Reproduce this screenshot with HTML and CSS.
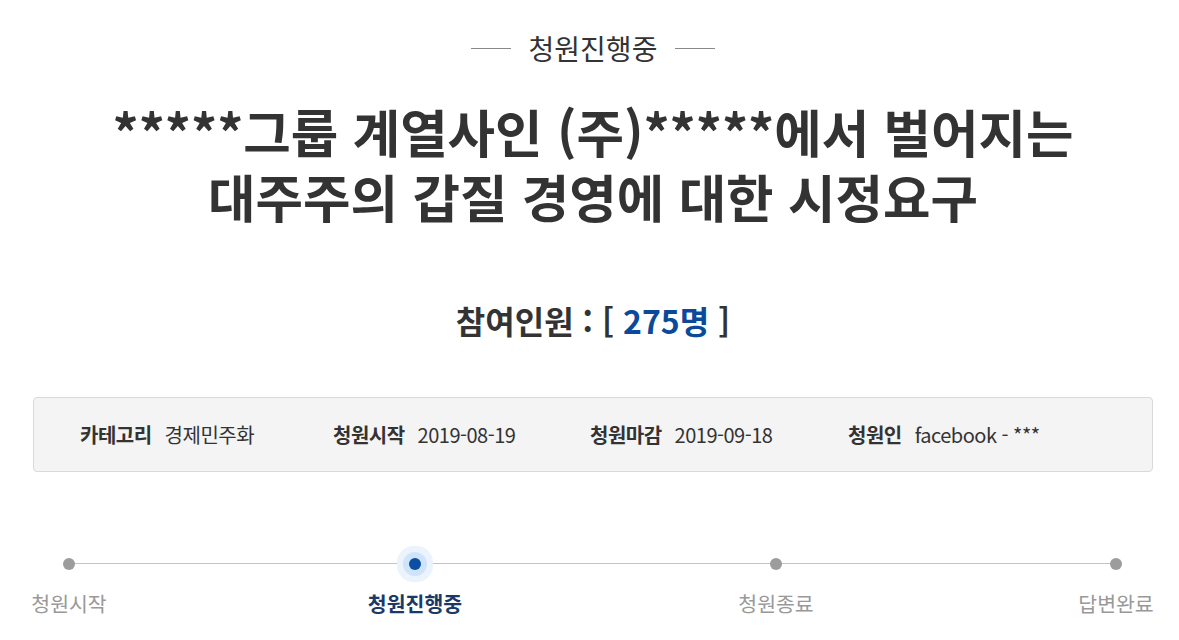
FILE: index.html
```html
<!DOCTYPE html>
<html lang="ko">
<head>
<meta charset="utf-8">
<link rel="stylesheet" href="styles.css">
</head>
<body>
<main class="page">
  <div class="status"><span class="status-line"></span><span class="status-text">청원진행중</span><span class="status-line"></span></div>
  <h1 class="title"><span class="title-line">*****그룹 계열사인 (주)*****에서 벌어지는</span><span class="title-line">대주주의 갑질 경영에 대한 시정요구</span></h1>
  <h2 class="count">참여인원 : [ <span class="count-num">275명</span> ]</h2>
  <ul class="info">
    <li class="info-item"><strong>카테고리</strong><span>경제민주화</span></li>
    <li class="info-item"><strong>청원시작</strong><span>2019-08-19</span></li>
    <li class="info-item"><strong>청원마감</strong><span>2019-09-18</span></li>
    <li class="info-item"><strong>청원인</strong><span>facebook - ***</span></li>
  </ul>
  <ol class="progress">
    <li class="step"><span class="dot"></span><span class="label">청원시작</span></li>
    <li class="spacer"></li>
    <li class="step active"><span class="dot"></span><span class="label">청원진행중</span></li>
    <li class="spacer"></li>
    <li class="step"><span class="dot"></span><span class="label">청원종료</span></li>
    <li class="spacer"></li>
    <li class="step"><span class="dot"></span><span class="label">답변완료</span></li>
  </ol>
</main>
</body>
</html>
```
FILE: styles.css
```css
* { box-sizing: border-box; }
html, body { margin: 0; padding: 0; background: #fff; }
body {
  font-family: "Noto Sans CJK KR", "Noto Sans", sans-serif;
  color: #333;
}
.page {
  width: 1120px;
  margin-left: 33px;
  padding-top: 30px;
}
.status {
  display: flex;
  justify-content: center;
  align-items: center;
  gap: 18px;
  height: 36px;
  font-size: 28px;
  line-height: 36px;
  color: #333;
}
.status-line {
  display: block;
  width: 40px;
  height: 1px;
  background: #888;
}
.title {
  margin: 32px 0 0;
  display: flex;
  flex-direction: column;
  align-items: center;
  font-size: 51.6px;
  line-height: 65px;
  font-weight: 700;
  color: #333;
}
.title-line {
  display: block;
  height: 65px;
  white-space: nowrap;
}
.count {
  margin: 72px 0 0;
  text-align: center;
  font-size: 32px;
  line-height: 40px;
  font-weight: 700;
  color: #333;
}
.count-num { color: #0b4a9a; }
.info {
  list-style: none;
  margin: 57px 0 0;
  padding: 0 0 0 46px;
  height: 75px;
  display: grid;
  grid-template-columns: 253px 257px 258px auto;
  align-items: center;
  background: #f4f4f4;
  border: 1px solid #d9d9d9;
  border-radius: 4px;
}
.info-item {
  display: flex;
  align-items: center;
  gap: 13px;
  font-size: 20px;
  line-height: 28px;
  color: #333;
  letter-spacing: -0.5px;
}
.info-item strong { font-weight: 700; color: #333; }
.progress {
  list-style: none;
  margin: 80px 0 0;
  padding: 0;
  position: relative;
  display: grid;
  grid-template-columns: 72px 264px 92px 279px 72px 267px 74px;
}
.progress::before {
  content: "";
  position: absolute;
  left: 36px;
  right: 37px;
  top: 11px;
  height: 1px;
  background: #c4c4c4;
}
.step {
  display: flex;
  flex-direction: column;
  align-items: center;
  position: relative;
}
.dot {
  display: block;
  width: 12px;
  height: 12px;
  margin-top: 6px;
  margin-bottom: 6px;
  border-radius: 50%;
  background: #9c9c9c;
}
.label {
  margin-top: 14px;
  font-size: 20.5px;
  line-height: 26px;
  color: #999;
  white-space: nowrap;
}
.step.active .dot {
  background: #0b4ea2;
  box-shadow: 0 0 0 6px #cfe3fb, 0 0 0 12px #ebf3fd;
}
.step.active .label {
  color: #1b3966;
  font-weight: 700;
  font-size: 20.5px;
}
```
